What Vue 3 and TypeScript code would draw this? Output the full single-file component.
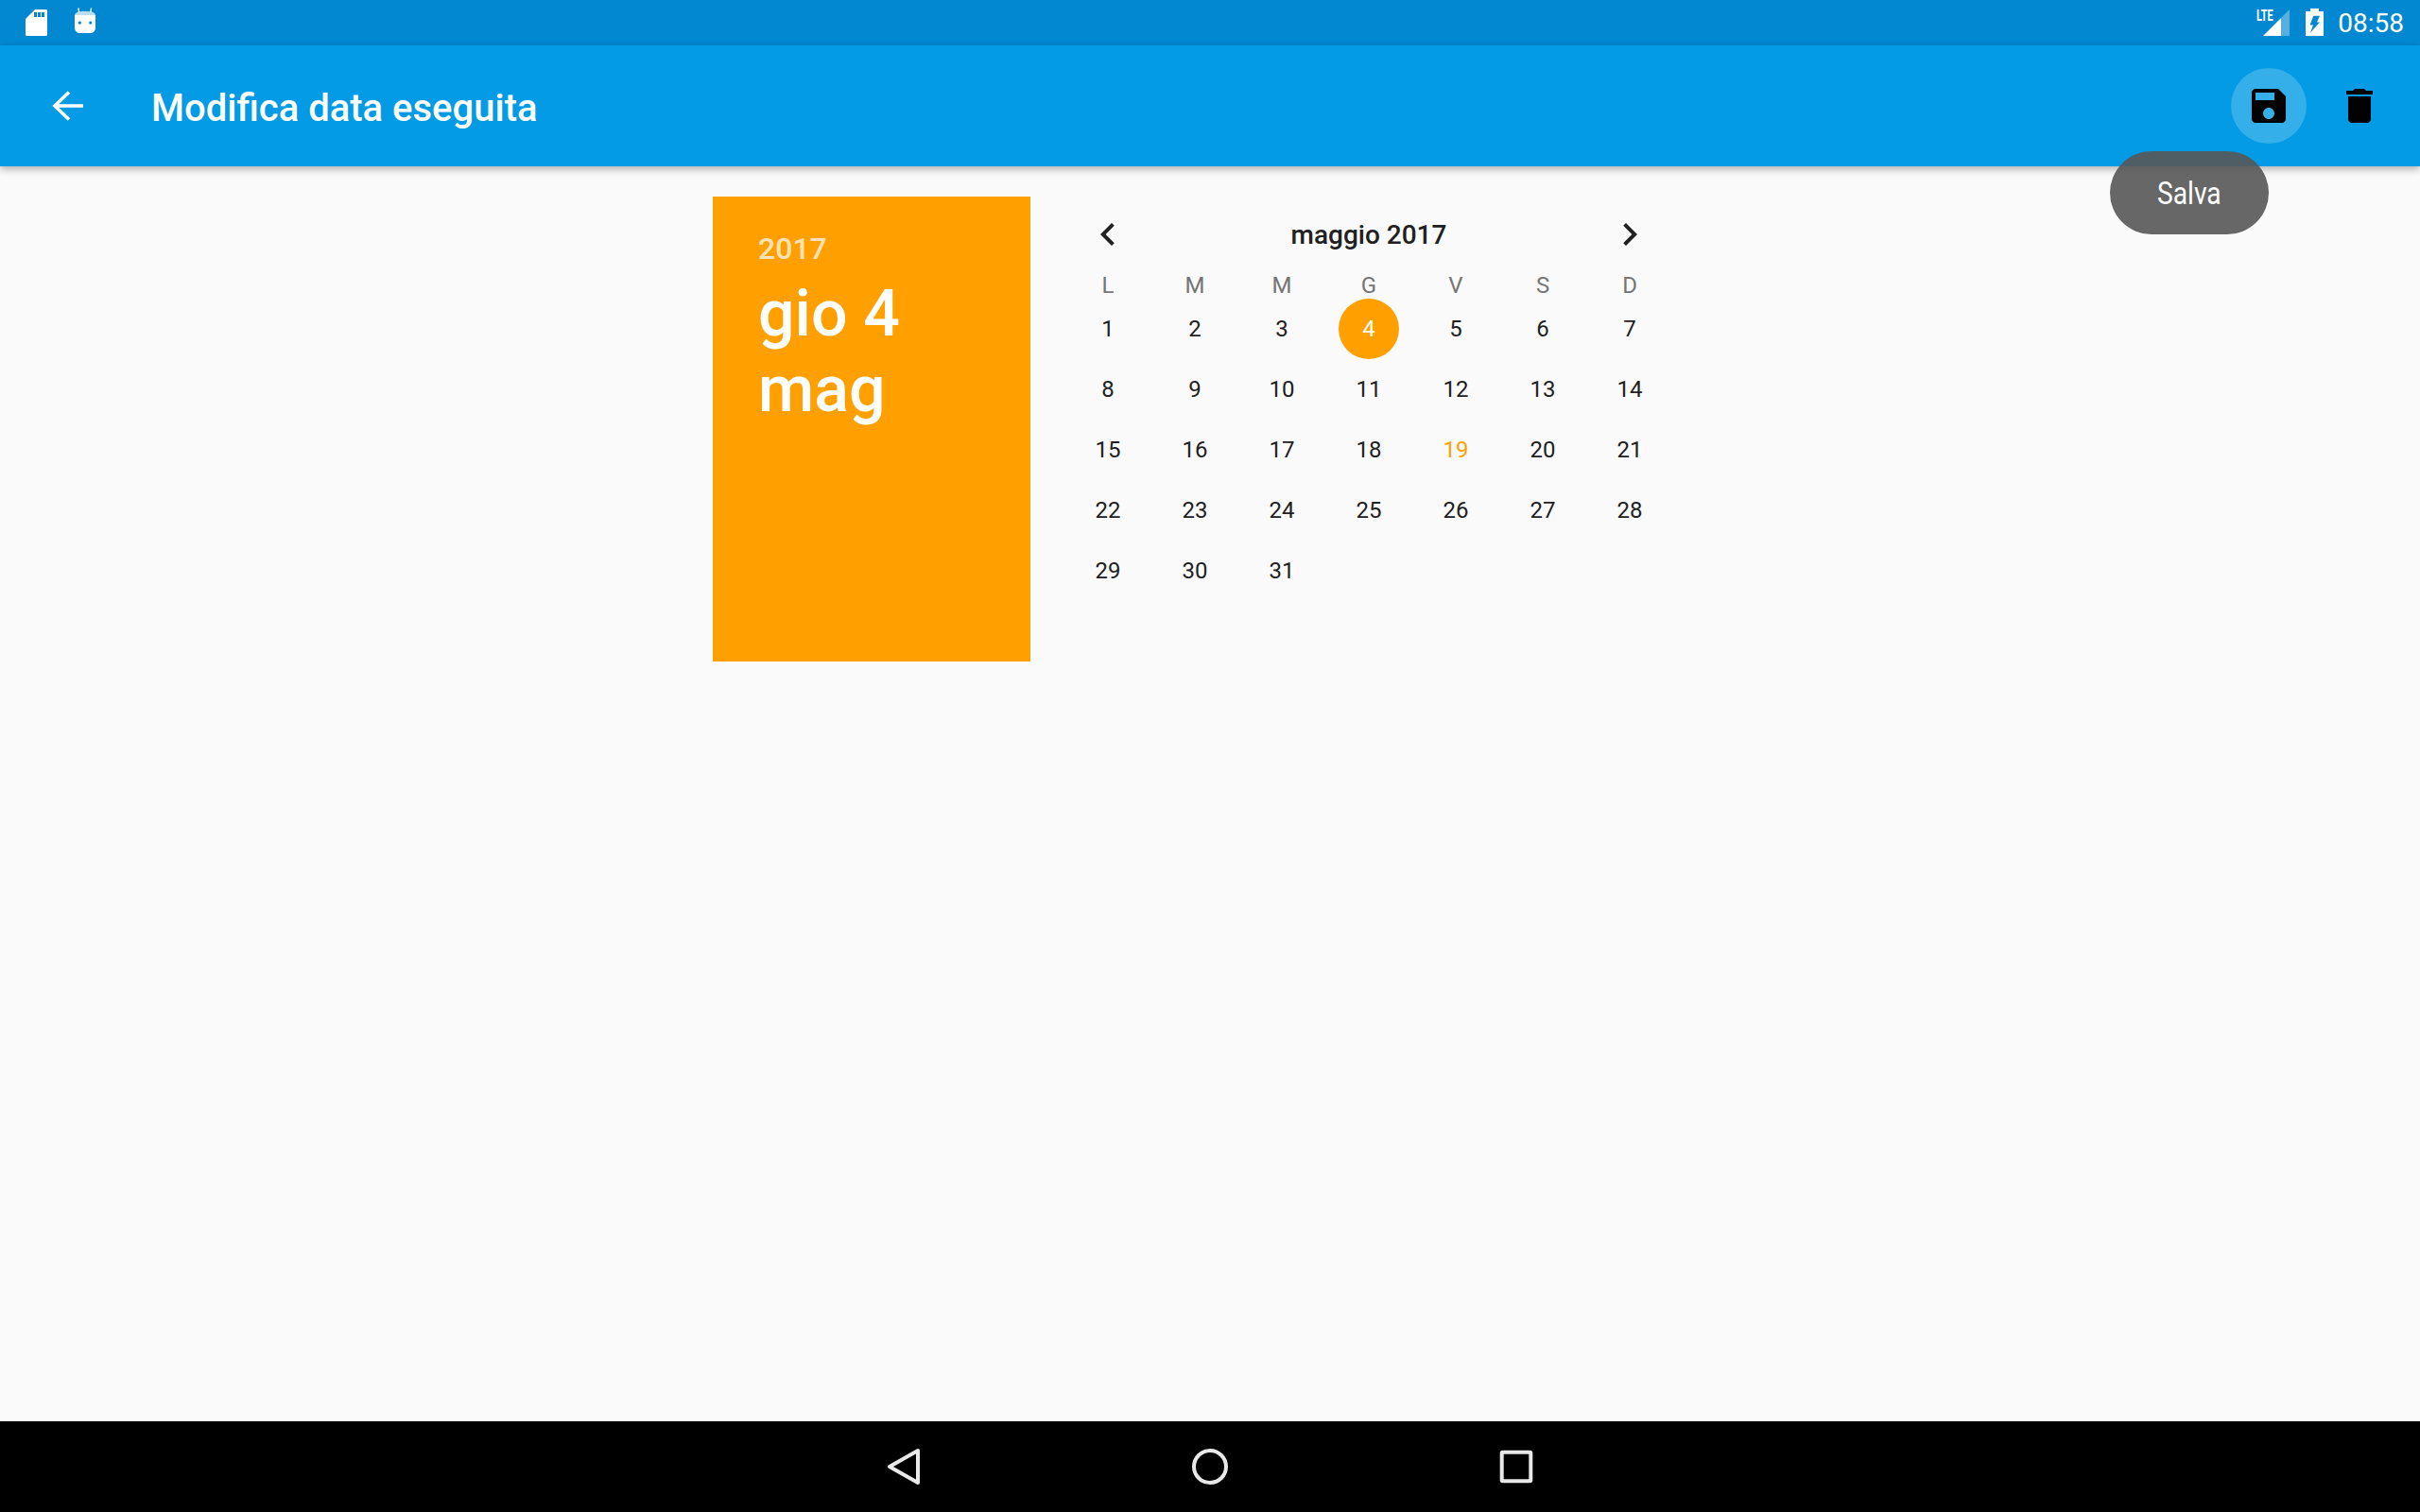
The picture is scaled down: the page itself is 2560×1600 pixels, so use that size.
<script setup lang="ts">
const weekdays: string[] = ['L', 'M', 'M', 'G', 'V', 'S', 'D']
const days: number[] = Array.from({ length: 31 }, (_, i) => i + 1)
const selectedDay = 4
const todayDay = 19
</script>

<template>
  <div class="screen">
    <div class="status-bar">
      <svg class="sd" width="23" height="28" viewBox="0 0 23 28">
        <path fill="#fff" fill-rule="evenodd" d="M10 0H21.5A1.5 1.5 0 0 1 23 1.5V26.5A1.5 1.5 0 0 1 21.5 28H1.5A1.5 1.5 0 0 1 0 26.5V10ZM9 3V8H12V3ZM13 3V8H16V3ZM17 3V8H20V3Z" />
      </svg>
      <svg class="droid" width="24" height="28" viewBox="0 0 24 28">
        <path stroke="#fff" stroke-width="1.4" fill="none" d="M5 0.5L5.6 5M18.5 0.5L17.9 5" />
        <path fill="#fff" fill-opacity="0.72" d="M1.2 8C1.2 5.5 4 4 12 4S22.8 5.5 22.8 8Z" />
        <path fill="#fff" fill-rule="evenodd" d="M1 8H23V21.5A5.5 5.5 0 0 1 17.5 27H6.5A5.5 5.5 0 0 1 1 21.5ZM6.3 14.5a1.6 1.6 0 1 0 0.01 0ZM17.7 14.5a1.6 1.6 0 1 0 0.01 0Z" />
      </svg>
      <div class="signal">
        <span class="lte">LTE</span>
        <svg width="28" height="28" viewBox="0 0 28 28">
          <path fill="#fff" fill-opacity="0.33" d="M28 0V28H19V9Z" />
          <path fill="#fff" d="M19 9V28H0Z" />
        </svg>
      </div>
      <svg class="battery" width="19" height="29" viewBox="0 0 19 29">
        <path fill="#fff" fill-rule="evenodd" d="M5 0H14V3H19V29H0V3H5ZM8.3 7.7L4.5 17.5H8L5 25.5L15 14.5H12L15 7.7Z" />
      </svg>
      <span class="time">08:58</span>
    </div>

    <header class="toolbar">
      <button class="nav-back" type="button" aria-label="Indietro">
        <svg width="48" height="48" viewBox="0 0 48 48">
          <path fill="none" stroke="#fff" stroke-width="3.6" d="M40 24H10M25 9.5L10 24L25 38.5" />
        </svg>
      </button>
      <h1 class="title">Modifica data eseguita</h1>
      <div class="actions">
        <button class="action" type="button" aria-label="Salva">
          <span class="ripple">
            <svg width="48" height="48" viewBox="0 0 24 24">
              <path fill="#000" d="M17 3H5c-1.11 0-2 .9-2 2v14c0 1.1.89 2 2 2h14c1.1 0 2-.9 2-2V7l-4-4zm-5 16c-1.66 0-3-1.34-3-3s1.34-3 3-3 3 1.34 3 3-1.34 3-3 3zm3-10H5V5h10v4z" />
            </svg>
          </span>
        </button>
        <button class="action" type="button" aria-label="Elimina">
          <svg width="48" height="48" viewBox="0 0 24 24">
            <path fill="#000" d="M6 19c0 1.1.9 2 2 2h8c1.1 0 2-.9 2-2V7H6v12zM19 4h-3.5l-1-1h-5l-1 1H5v2h14V4z" />
          </svg>
        </button>
      </div>
    </header>

    <main class="content">
      <section class="picker">
        <div class="date-header">
          <div class="year">2017</div>
          <div class="date">gio 4<br />mag</div>
        </div>
        <div class="calendar">
          <div class="month-row">
            <svg width="48" height="48" viewBox="0 0 24 24">
              <path fill="#212121" d="M15.41 7.41L14 6l-6 6 6 6 1.41-1.41L10.83 12z" />
            </svg>
            <span class="month">maggio 2017</span>
            <svg width="48" height="48" viewBox="0 0 24 24">
              <path fill="#212121" d="M10 6L8.59 7.41 13.17 12l-4.58 4.58L10 18l6-6z" />
            </svg>
          </div>
          <div class="week">
            <span v-for="(w, i) in weekdays" :key="i" class="weekday">{{ w }}</span>
          </div>
          <div class="days">
            <span
              v-for="d in days"
              :key="d"
              class="day"
              :class="{ selected: d === selectedDay, today: d === todayDay }"
            ><span class="day-num">{{ d }}</span></span>
          </div>
        </div>
      </section>
    </main>

    <nav class="nav-bar">
      <svg width="36" height="40" viewBox="0 0 36 40">
        <path fill="none" stroke="#e8e8e8" stroke-width="4" stroke-linejoin="round" d="M33 3V37L3 20Z" />
      </svg>
      <svg width="40" height="40" viewBox="0 0 40 40">
        <circle cx="20" cy="20" r="17" fill="none" stroke="#e8e8e8" stroke-width="4" />
      </svg>
      <svg width="36" height="36" viewBox="0 0 36 36">
        <rect x="2.7" y="2.7" width="30.6" height="30.6" rx="1" fill="none" stroke="#e8e8e8" stroke-width="4" />
      </svg>
    </nav>

    <div class="tooltip"><span>Salva</span></div>
  </div>
</template>

<style scoped>
.screen {
  position: relative;
  display: flex;
  flex-direction: column;
  width: 2560px;
  height: 1600px;
  overflow: hidden;
  background: #fafafa;
  font-family: Roboto, "Liberation Sans", sans-serif;
  color: #212121;
}
button {
  padding: 0;
  border: 0;
  background: none;
  display: flex;
  align-items: center;
  justify-content: center;
}
svg {
  display: block;
  flex: none;
}

.status-bar {
  flex: 0 0 48px;
  display: flex;
  align-items: flex-start;
  background: #0288d1;
  color: #fff;
  padding-left: 27px;
}
.sd {
  margin-top: 10px;
}
.droid {
  margin-top: 8px;
  margin-left: 28px;
}
.signal {
  position: relative;
  margin-left: auto;
  margin-top: 10px;
  width: 28px;
  height: 28px;
}
.lte {
  position: absolute;
  left: -7px;
  top: -1px;
  font-size: 16px;
  line-height: 16px;
  font-weight: 700;
  transform: scaleX(0.68);
  transform-origin: left center;
}
.battery {
  margin-top: 9px;
  margin-left: 17px;
}
.time {
  margin-left: 15px;
  margin-right: 17px;
  margin-top: 8px;
  font-size: 28px;
  line-height: 34px;
}

.toolbar {
  position: relative;
  z-index: 2;
  flex: 0 0 128px;
  display: flex;
  align-items: center;
  background: #039be5;
  box-shadow: 0 3px 8px rgba(0, 0, 0, 0.3);
  padding-left: 48px;
  padding-right: 16px;
}
.nav-back {
  width: 48px;
  height: 48px;
}
.title {
  margin: 5px 0 0 64px;
  font-size: 40px;
  line-height: 48px;
  font-weight: 500;
  color: #fff;
}
.actions {
  margin-left: auto;
  display: flex;
}
.action {
  width: 96px;
  height: 96px;
}
.ripple {
  width: 80px;
  height: 80px;
  border-radius: 50%;
  background: rgba(255, 255, 255, 0.2);
  display: flex;
  align-items: center;
  justify-content: center;
}

.content {
  flex: 1;
  display: flex;
  justify-content: center;
  padding-top: 32px;
}
.picker {
  display: flex;
  width: 1052px;
  height: 492px;
}
.date-header {
  flex: 0 0 336px;
  background: #ffa000;
  padding: 35px 0 0 48px;
  box-sizing: border-box;
  color: #fff;
}
.year {
  font-size: 32px;
  line-height: 40px;
  font-weight: 500;
  opacity: 0.7;
}
.date {
  margin-top: 9px;
  font-size: 68px;
  line-height: 80px;
  font-weight: 500;
}
.calendar {
  padding: 16px 36px 0;
  width: 644px;
}
.month-row {
  display: flex;
  align-items: center;
  justify-content: space-between;
  height: 48px;
  padding: 0 22px;
}
.month {
  margin-top: 2px;
  font-size: 28px;
  line-height: 48px;
  font-weight: 500;
  color: #212121;
}
.week {
  display: grid;
  grid-template-columns: repeat(7, 92px);
  height: 44px;
  padding-top: 16px;
  box-sizing: border-box;
}
.weekday {
  text-align: center;
  font-size: 24px;
  line-height: 28px;
  color: #757575;
}
.days {
  display: grid;
  grid-template-columns: repeat(7, 92px);
  grid-auto-rows: 64px;
}
.day {
  display: flex;
  align-items: center;
  justify-content: center;
  font-size: 24px;
  color: #212121;
}
.day-num {
  width: 64px;
  height: 64px;
  line-height: 64px;
  border-radius: 50%;
  text-align: center;
}
.day.selected .day-num {
  background: #ffa000;
  color: #fff;
}
.day.today {
  color: #ffa000;
}

.nav-bar {
  flex: 0 0 96px;
  display: flex;
  align-items: center;
  justify-content: center;
  gap: 286px;
  background: #000;
}

.tooltip {
  position: absolute;
  z-index: 3;
  left: 2232px;
  top: 160px;
  width: 168px;
  height: 88px;
  border-radius: 44px;
  background: rgba(87, 87, 87, 0.907);
  display: flex;
  align-items: center;
  justify-content: center;
  font-size: 34px;
  color: #fff;
}
.tooltip span {
  transform: scaleX(0.83);
}
</style>
